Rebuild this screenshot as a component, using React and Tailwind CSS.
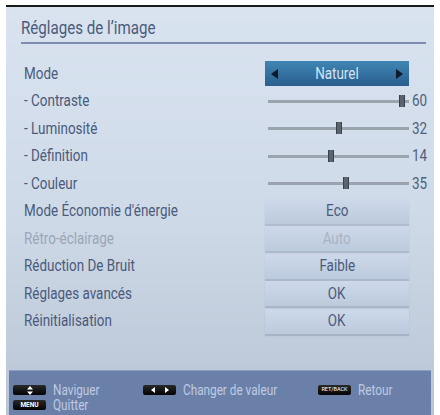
import React from 'react';

const font = { fontFamily: 'Roboto, "Liberation Sans", sans-serif' };

// condensed look: Roboto squeezed horizontally
function T({ children, className = '', origin = 'origin-left' }) {
  return <span className={'inline-block whitespace-nowrap scale-x-[0.84] ' + origin + ' ' + className}>{children}</span>;
}

function Slider({ pos, value }) {
  return (
    <div className="flex items-center h-full">
      <div className="relative w-[141px] h-[3px] bg-[#9aa3ae] ml-[3px]">
        <div
          className="absolute top-[-5px] w-[6px] h-[12px] bg-[#5b636e] border-x border-[#3a4048]"
          style={{ left: pos - 3 }}
        />
      </div>
      <T className="ml-[3px] text-[16px] text-[#4f5f7e]">{value}</T>
    </div>
  );
}

function Box({ children, dim }) {
  return (
    <div
      className={
        'w-[144px] h-[25px] flex items-center justify-center text-[16px] bg-gradient-to-b from-[#cdd9ea] to-[#bccadd] shadow-[0_2px_1px_rgba(120,135,160,0.35)] ' +
        (dim ? 'text-[#a9b3c3]' : 'text-[#4a5a7a]')
      }
    >
      <T origin="origin-center">{children}</T>
    </div>
  );
}

const rows = [
  { label: 'Mode', kind: 'mode' },
  { label: '- Contraste', kind: 'slider', pos: 134, value: '60' },
  { label: '- Luminosité', kind: 'slider', pos: 71, value: '32' },
  { label: '- Définition', kind: 'slider', pos: 63, value: '14' },
  { label: '- Couleur', kind: 'slider', pos: 78, value: '35' },
  { label: "Mode Économie d'énergie", kind: 'box', value: 'Eco' },
  { label: 'Rétro-éclairage', kind: 'box', value: 'Auto', dim: true },
  { label: 'Réduction De Bruit', kind: 'box', value: 'Faible' },
  { label: 'Réglages avancés', kind: 'box', value: 'OK' },
  { label: 'Réinitialisation', kind: 'box', value: 'OK' },
];

function Key({ children, w = 33 }) {
  return (
    <div
      className="h-[10px] rounded-[2px] bg-gradient-to-b from-[#2a2a2a] to-[#050505] flex items-center justify-center text-white text-[7px] leading-none"
      style={{ width: w }}
    >
      {children}
    </div>
  );
}

export default function App() {
  return (
    <div className="w-[440px] h-[415px] bg-white pt-[5px] pl-[6px] pr-[6px]" style={font}>
      <div className="w-[428px] h-[410px] border-t-2 border-[#1a1a1a] bg-gradient-to-b from-[#d9e3f0] via-[#cfdae8] to-[#b9c5d5] flex flex-col">
        <div className="pl-[15px] pr-[8px] pt-[10px]">
          <div className="text-[18px] text-[#4a5a7a] pb-[3px] border-b-2 border-[#7d8daf] leading-[22px]">
            <T>Réglages de l’image</T>
          </div>
        </div>
        <div className="pl-[18px] pt-[16px] flex flex-col">
          {rows.map((r, i) => (
            <div key={i} className="flex items-center h-[27.5px]">
              <div
                className={
                  'w-[241px] text-[16px] ' + (r.dim ? 'text-[#9aa6b8]' : 'text-[#4a5a7a]')
                }
              >
                <T>{r.label}</T>
              </div>
              <div className="h-full flex items-center">
                {r.kind === 'mode' && (
                  <div className="w-[144px] h-[25px] bg-gradient-to-b from-[#3f86b4] to-[#2b5e8e] flex items-center justify-between px-[6px]">
                    <span className="w-0 h-0 border-y-[5px] border-y-transparent border-r-[7px] border-r-[#0e1a28]" />
                    <T origin="origin-center" className="text-[16px] text-[#d3e3f3]">Naturel</T>
                    <span className="w-0 h-0 border-y-[5px] border-y-transparent border-l-[7px] border-l-[#0e1a28]" />
                  </div>
                )}
                {r.kind === 'slider' && <Slider pos={r.pos} value={r.value} />}
                {r.kind === 'box' && <Box dim={r.dim}>{r.value}</Box>}
              </div>
            </div>
          ))}
        </div>
        <div className="flex-1" />
        <div className="mx-[3px] h-[45px] bg-[#6b80a9] border-t border-[#8a9cc0] pl-[4px] pt-[12px] text-[14px] text-[#bfcbe2] leading-[14px]">
          <div className="flex items-center h-[14px]">
            <div className="w-[130px] flex items-center gap-[7px]">
              <Key>
                <svg width="6" height="9" viewBox="0 0 6 9">
                  <path d="M3 0 L6 3.5 H0 Z M3 9 L6 5.5 H0 Z" fill="#fff" />
                </svg>
              </Key>
              <T>Naviguer</T>
            </div>
            <div className="w-[175px] flex items-center gap-[7px]">
              <Key>
                <svg width="18" height="6" viewBox="0 0 18 6">
                  <path d="M0 3 L4 0 V6 Z M18 3 L14 0 V6 Z" fill="#fff" />
                </svg>
              </Key>
              <T>Changer de valeur</T>
            </div>
            <div className="flex items-center gap-[7px]">
              <Key><span className="text-[5.5px]">RET/BACK</span></Key>
              <T>Retour</T>
            </div>
          </div>
          <div className="flex items-center h-[14px] mt-[1px] gap-[7px]">
            <Key><span className="text-[6.5px] font-bold">MENU</span></Key>
            <T>Quitter</T>
          </div>
        </div>
      </div>
    </div>
  );
}
